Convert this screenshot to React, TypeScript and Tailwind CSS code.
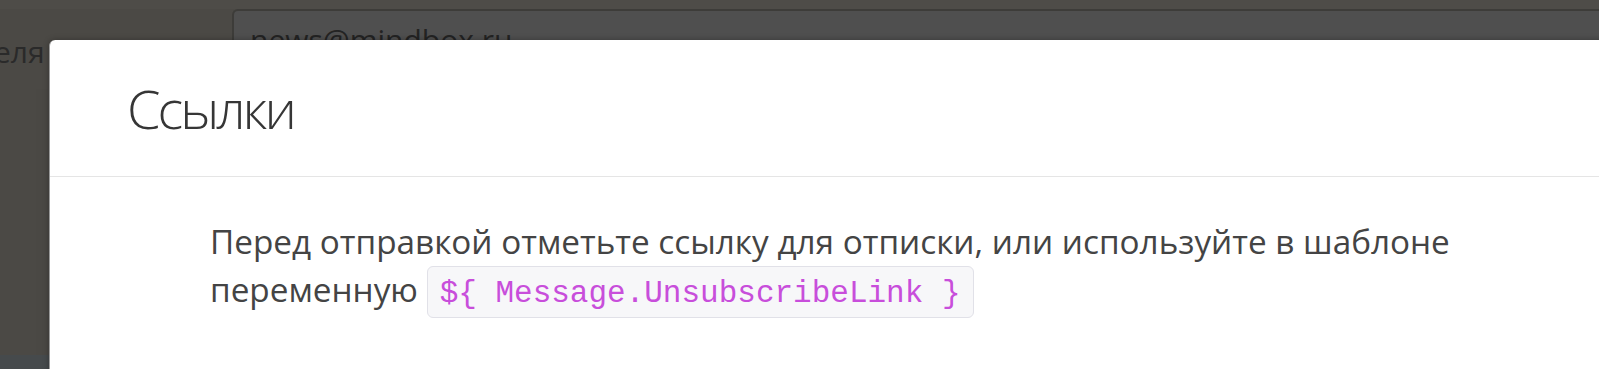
export default function App() {
  return (
    <div className="relative flex h-[369px] w-[1599px] flex-col overflow-hidden bg-[#4b4945] font-['Open_Sans',sans-serif]">
      {/* page behind the overlay */}
      <div className="h-[9px] shrink-0 bg-[#4e4c48]" />
      <div className="flex h-[80px] shrink-0 items-start">
        <div className="w-[232px] pt-[28px] text-[30px] leading-none text-[#2a2a2a]">
          <span className="-ml-[6px]">еля</span>
        </div>
        <div className="h-[80px] flex-1 rounded-tl-[6px] border-t-2 border-l-2 border-[#3d3c39] bg-[#4f4f4f] pl-[16px] pt-[14px] text-[30px] leading-none text-[#232323]">
          news@mindbox.ru
        </div>
      </div>
      <div className="h-[266px] shrink-0 pl-[36px]">
        <div className="h-full w-[12px] bg-[#4a4844]" />
      </div>
      <div className="flex-1 bg-[#464a4c]" />

      {/* modal */}
      <div className="absolute left-[49px] top-[40px] right-[-20px] bottom-[-40px] rounded-tl-[6px] border-l border-[#9a9a9a] bg-white shadow-[0_0_6px_rgba(0,0,0,0.3)]">
        <div className="h-[137px] border-b border-[#e5e5e5] pl-[77px] pt-[41px]">
          <h3 className="text-[54px] font-light leading-none tracking-[-3px] text-[#363636]">Ссылки</h3>
        </div>
        <div className="pl-[160px] pt-[40px] text-[33.3px] leading-[48px] text-[#444]">
          <p>
            Перед отправкой отметьте ссылку для отписки, или используйте в шаблоне
            <br />
            переменную{" "}
            <code className="inline-block rounded-[6px] border border-[#e1e1e8] bg-[#f7f7f9] px-[12px] pt-[9px] pb-[5px] font-['Liberation_Mono',monospace] text-[31px] leading-[36px] text-[#c84edb]">
              {"${ Message.UnsubscribeLink }"}
            </code>
          </p>
        </div>
      </div>
    </div>
  )
}
